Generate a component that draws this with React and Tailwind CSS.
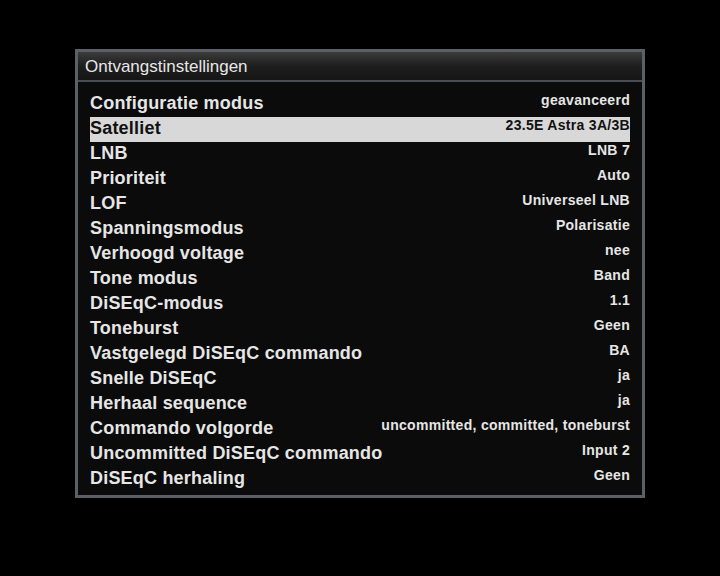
const ROWS = [
  ['Configuratie modus', 'geavanceerd'],
  ['Satelliet', '23.5E Astra 3A/3B'],
  ['LNB', 'LNB 7'],
  ['Prioriteit', 'Auto'],
  ['LOF', 'Universeel LNB'],
  ['Spanningsmodus', 'Polarisatie'],
  ['Verhoogd voltage', 'nee'],
  ['Tone modus', 'Band'],
  ['DiSEqC-modus', '1.1'],
  ['Toneburst', 'Geen'],
  ['Vastgelegd DiSEqC commando', 'BA'],
  ['Snelle DiSEqC', 'ja'],
  ['Herhaal sequence', 'ja'],
  ['Commando volgorde', 'uncommitted, committed, toneburst'],
  ['Uncommitted DiSEqC commando', 'Input 2'],
  ['DiSEqC herhaling', 'Geen'],
]

export default function App() {
  const selected = 1
  return (
    <div className="w-[720px] h-[576px] bg-black pt-[49px] pl-[75px] font-['Liberation_Sans',Arial,sans-serif]">
      <div className="w-[570px] h-[449px] border-[3px] border-[#5c6066] bg-[#0b0b0b] flex flex-col">
        {/* Title bar */}
        <div className="h-[30px] shrink-0 bg-gradient-to-b from-[#3c3c3c] via-[#1e1e1e] to-[#151515] border-b-[2px] border-[#4a4e54] flex items-center px-[7px]">
          <span className="text-[#e8e8e8] text-[17px] leading-none">Ontvangstinstellingen</span>
        </div>
        {/* Settings list */}
        <div className="flex flex-col pt-[10px] px-[12px]">
          {ROWS.map(([label, value], i) => (
            <div
              key={label}
              className={`h-[25px] flex justify-between ${
                i === selected ? 'bg-[#d8d8d8] text-[#111111]' : 'text-[#e6e6e6]'
              }`}
            >
              <span className="text-[18px] font-bold leading-[23px] tracking-[0.2px]">{label}</span>
              <span className="text-[14px] font-bold leading-none tracking-[0.3px] pt-[1px]">{value}</span>
            </div>
          ))}
        </div>
      </div>
    </div>
  )
}
